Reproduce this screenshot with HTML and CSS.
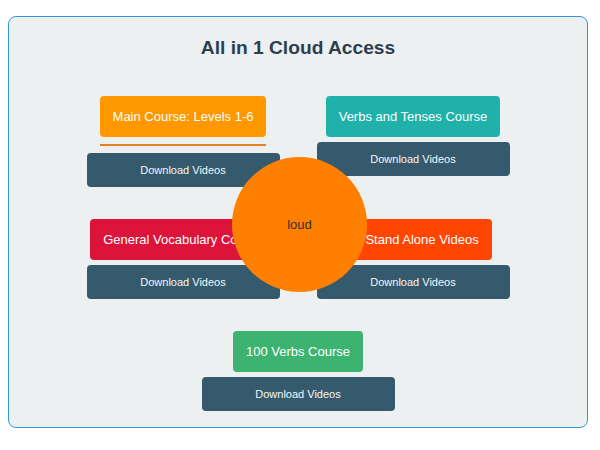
FILE: index.html
```html
<!DOCTYPE html>
<html>
<head>
    <title>All in 1 Cloud Access</title>
    <link rel="stylesheet" href="styles.css">
</head>
<body>

<div class="card">
    <h2>All in 1 Cloud Access</h2>

    <div class="courses">
        <div class="course">
            <div class="head">
                <div class="label main">Main Course: Levels 1-6</div>
                <div class="bar"></div>
            </div>
            <button>Download Videos</button>
        </div>
        <div class="course">
            <div class="label verbs">Verbs and Tenses Course</div>
            <button>Download Videos</button>
        </div>
        <div class="course">
            <div class="label vocab">General Vocabulary Course</div>
            <button>Download Videos</button>
        </div>
        <div class="course">
            <div class="label alone">All Stand Alone Videos</div>
            <button>Download Videos</button>
        </div>
        <div class="course wide">
            <div class="label hundred">100 Verbs Course</div>
            <button>Download Videos</button>
        </div>
    </div>

    <div class="bubble">loud</div>
</div>

</body>
</html>
```

FILE: styles.css
```css
body {
    font-family: "Liberation Sans", Arial, sans-serif;
    margin: 0;
    padding: 16px 8px;
}

.card {
    position: relative;
    width: 580px;
    box-sizing: border-box;
    padding: 20px 20px 16px;
    background-color: #ecf0f1;
    border: 1px solid #3498db;
    border-radius: 8px;
}

h2 {
    text-align: center;
    color: #2c3e50;
    font-size: 19.2px;
    line-height: 22px;
    margin: 0 0 37px;
}

.courses {
    display: grid;
    grid-template-columns: 193px 193px;
    justify-content: center;
    column-gap: 37px;
    row-gap: 32px;
    align-items: start;
}

.course {
    display: flex;
    flex-direction: column;
    align-items: center;
    gap: 5px;
}

.course.wide {
    grid-column: 1 / 3;
}

.head {
    display: flex;
    flex-direction: column;
}

.bar {
    height: 2px;
    margin: 7px 0 2px;
    background-color: #e67e22;
}

.label {
    color: white;
    font-size: 13px;
    line-height: 17px;
    padding: 12px 13px;
    border-radius: 4px;
    white-space: nowrap;
}

.main { background-color: #ff9800; }
.verbs { background-color: #20b2aa; }
.vocab { background-color: #dc143c; }
.alone { background-color: #ff4500; }
.hundred { background-color: #3cb371; }

button {
    width: 193px;
    padding: 10px;
    font-family: inherit;
    font-size: 11px;
    line-height: 14px;
    background-color: #355a6e;
    color: #f4f6f7;
    border: none;
    border-radius: 4px;
    cursor: pointer;
}

.bubble {
    position: absolute;
    left: 223px;
    top: 140px;
    width: 135px;
    height: 135px;
    border-radius: 50%;
    background-color: #ff7f00;
    color: #333;
    font-size: 13px;
    display: flex;
    align-items: center;
    justify-content: center;
}
```
